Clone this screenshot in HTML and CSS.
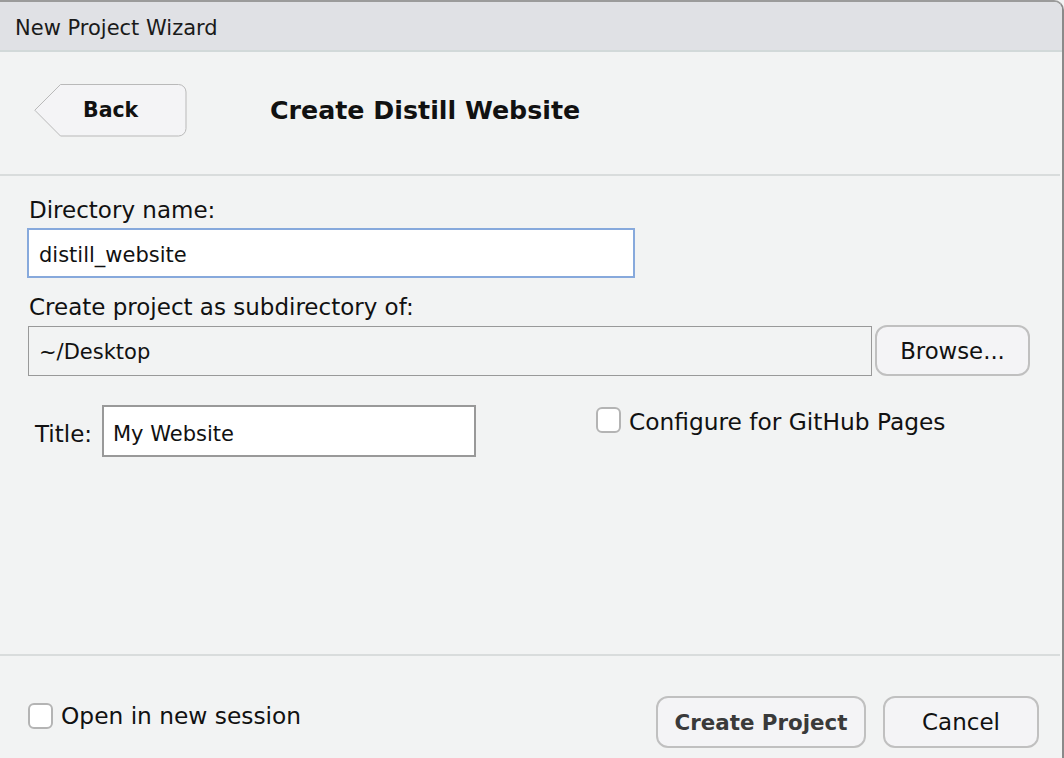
FILE: index.html
```html
<!DOCTYPE html>
<html>
<head>
<meta charset="utf-8">
<link rel="stylesheet" href="styles.css">
</head>
<body>
<div class="window">
  <div class="titlebar">New Project Wizard</div>
  <div class="header">
    <button class="back">
      <svg class="back-shape" width="153" height="53" viewBox="0 0 153 53">
        <path d="M26.5 0.5 H144.5 A7.5 7.5 0 0 1 152 8 V44.5 A7.5 7.5 0 0 1 144.5 52 H26.5 L0.8 26.2 Z" fill="#f4f4f6" stroke="#b9b9b9" stroke-width="1"/>
      </svg>
      <span class="back-label">Back</span>
    </button>
    <h1 class="page-title">Create Distill Website</h1>
  </div>
  <div class="sep"></div>
  <div class="content">
    <label class="lbl lbl-dir">Directory name:</label>
    <div class="input input-focus">distill_website</div>
    <label class="lbl lbl-sub">Create project as subdirectory of:</label>
    <div class="row-path">
      <div class="input input-path">~/Desktop</div>
      <button class="btn btn-browse">Browse...</button>
    </div>
    <div class="row-title">
      <label class="lbl lbl-title">Title:</label>
      <div class="input input-title">My Website</div>
      <div class="check-group gh">
        <span class="checkbox"></span>
        <span class="check-label">Configure for GitHub Pages</span>
      </div>
    </div>
  </div>
  <div class="sep sep-bottom"></div>
  <div class="footer">
    <div class="check-group">
      <span class="checkbox"></span>
      <span class="check-label">Open in new session</span>
    </div>
    <div class="footer-buttons">
      <button class="btn btn-create">Create Project</button>
      <button class="btn btn-cancel">Cancel</button>
    </div>
  </div>
</div>
</body>
</html>
```

FILE: styles.css
```css
* { box-sizing: border-box; }
html, body { margin: 0; padding: 0; }
body {
  background: #f2f3f3;
  font-family: "DejaVu Sans", Verdana, sans-serif;
  color: #111;
  width: 1064px;
  height: 758px;
  overflow: hidden;
}
.window {
  width: 1064px;
  height: 758px;
  background: #f2f3f3;
  border-top: 2px solid #9b9b9b;
  border-right: 2px solid #8a8a8a;
  border-top-right-radius: 10px;
  overflow: hidden;
}
.titlebar {
  height: 50px;
  background: #e0e1e5;
  border-bottom: 2px solid #d2d9d9;
  padding-left: 15px;
  font-size: 21px;
  line-height: 52px;
  color: #1a1a1a;
}
.header {
  height: 122px;
  display: flex;
  align-items: center;
  padding-left: 34px;
  padding-bottom: 6px;
}
.back {
  position: relative;
  width: 153px;
  height: 53px;
  border: none;
  background: transparent;
  padding: 0;
  font-family: inherit;
  cursor: pointer;
}
.back-shape {
  position: absolute;
  left: 0;
  top: 0;
}
.back-label {
  position: relative;
  display: block;
  padding-left: 49px;
  text-align: left;
  font-weight: bold;
  font-size: 20.5px;
  color: #111;
}
.page-title {
  margin: 0 0 0 83px;
  font-size: 25.3px;
  font-weight: bold;
  color: #111;
}
.sep {
  height: 2px;
  background: #d9dcdc;
  margin-right: 2px;
}
.content {
  height: 478px;
  padding: 20px 0 0 27px;
  display: flex;
  flex-direction: column;
}
.lbl {
  font-size: 23px;
  line-height: 28px;
  color: #111;
}
.lbl-dir { padding-left: 2px; }
.input {
  background: #fff;
  font-size: 21px;
  color: #111;
  padding-left: 10px;
}
.input-focus {
  width: 608px;
  height: 50px;
  line-height: 50px;
  border: 2px solid #87a9dc;
  margin-top: 4px;
  padding-left: 10px;
}
.lbl-sub {
  margin-top: 15px;
  padding-left: 2px;
}
.row-path {
  display: flex;
  align-items: center;
  margin-top: 4px;
}
.input-path {
  width: 844px;
  height: 50px;
  line-height: 50px;
  border: 1.5px solid #999;
  background: #f2f3f3;
  margin-left: 1px;
}
.btn {
  font-family: inherit;
  background: #f4f4f6;
  border: 2px solid #c0c0c0;
  border-radius: 12px;
  color: #111;
  cursor: pointer;
}
.btn-browse {
  width: 155px;
  height: 51px;
  margin-left: 3px;
  font-size: 22.8px;
}
.row-title {
  display: flex;
  align-items: flex-start;
  margin-top: 29px;
}
.lbl-title {
  width: 59px;
  margin-left: 8px;
  margin-top: 15px;
}
.input-title {
  width: 374px;
  height: 52px;
  line-height: 54px;
  border: 2px solid #999;
  margin-left: 8px;
  padding-left: 9px;
}
.check-group {
  display: flex;
  align-items: center;
}
.gh {
  margin-left: 120px;
  margin-top: 0;
}
.gh .check-label { margin-top: 3px; }
.checkbox {
  width: 25px;
  height: 26px;
  border: 2px solid #b4b4b4;
  border-radius: 6px;
  background: #fff;
  display: inline-block;
  flex-shrink: 0;
}
.check-label {
  font-size: 23.3px;
  margin-left: 8px;
  color: #111;
}
.footer {
  display: flex;
  align-items: center;
  justify-content: space-between;
  padding: 40px 23px 0 28px;
}
.footer .check-group { margin-top: -12px; }
.footer .check-label { margin-top: -2px; }
.footer-buttons {
  display: flex;
  gap: 17px;
}
.btn-create {
  width: 210px;
  height: 52px;
  font-size: 21.4px;
  font-weight: bold;
  color: #3a3a3a;
}
.btn-cancel {
  width: 156px;
  height: 52px;
  font-size: 23px;
}
```
